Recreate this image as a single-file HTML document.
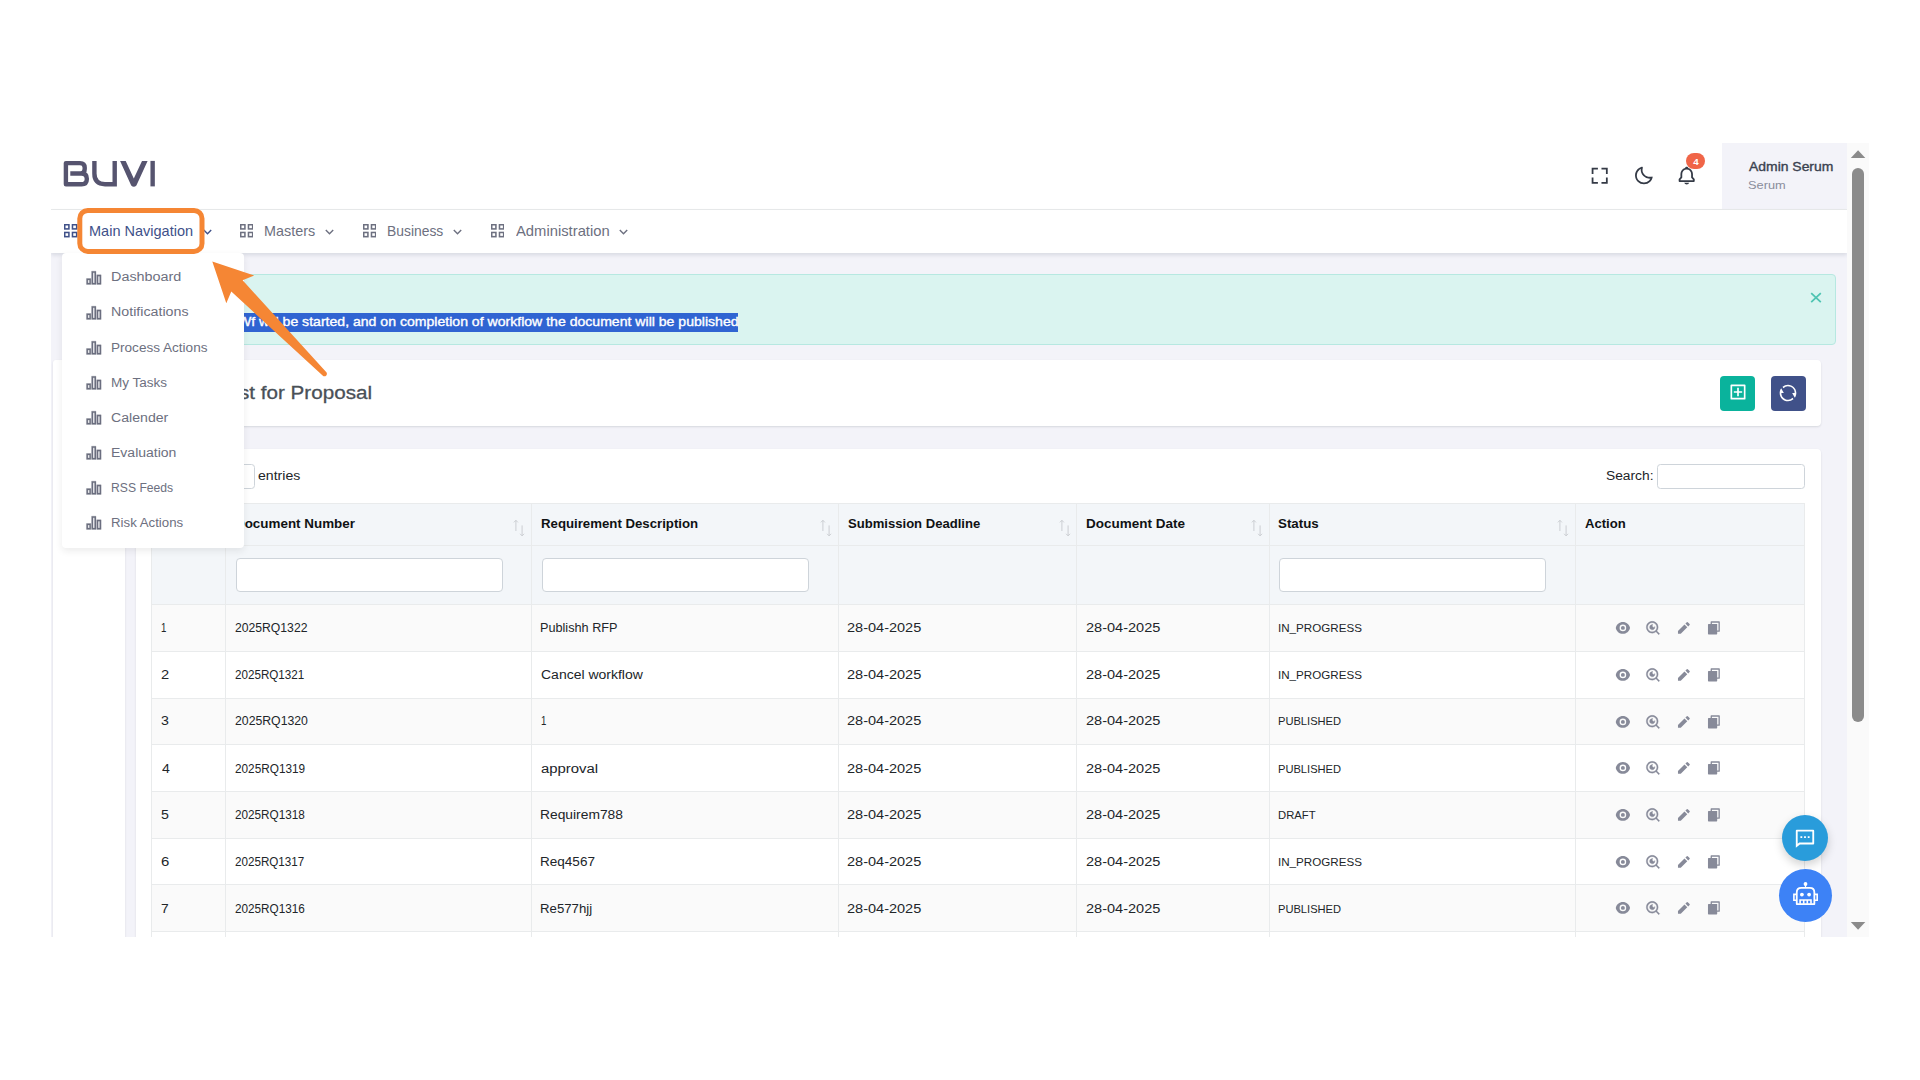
<!DOCTYPE html>
<html lang="en"><head><meta charset="utf-8"><title>Request for Proposal</title>
<style>
html,body{margin:0;padding:0;background:#fff}
body{width:1920px;height:1080px;overflow:hidden;position:relative;font-family:"Liberation Sans",sans-serif}
#clip{position:absolute;left:51px;top:143px;width:1817.7px;height:794px;overflow:hidden}
#in{position:absolute;left:-51px;top:-143px;width:1920px;height:1080px}
.b{position:absolute;display:block}
.tx{position:absolute;white-space:pre;line-height:1;transform-origin:0 50%;font-family:"Liberation Sans",sans-serif}
.med{-webkit-text-stroke:0.35px currentColor}
.ttl{-webkit-text-stroke:0.3px currentColor}
</style></head>
<body>
<div id="clip"><div id="in">
<div class="b" style="left:51px;top:143px;width:1796.1px;height:794px;background:#f3f3f9"></div>
<div class="b" style="left:51px;top:143px;width:1796.1px;height:66px;background:#ffffff"></div>
<div class="b" style="left:51px;top:209px;width:1796.1px;height:1px;background:#e9ebec"></div>
<div class="b" style="left:1722px;top:143px;width:125.1px;height:66.3px;background:#f3f3f9"></div>
<svg class="b" style="left:60px;top:156px" width="100" height="36" viewBox="60 156 100 36"><g fill="none" stroke="#56546f" stroke-width="4.4" stroke-linejoin="round"><path d="M70.3 173.5 H80.5 Q84.7 173.5 84.7 169 V167.6 Q84.7 163.1 80 163.1 H65.9 V184.2 H81.6 Q86.8 184.2 86.8 179.2 V178.6 Q86.8 173.5 81.4 173.5"/><path stroke-linejoin="miter" d="M94.4 160.9 V173.6 Q94.4 184.2 105 184.2 H114.7 V160.9"/><path d="M152.65 160.9 V186.4"/></g><path fill="#56546f" d="M120.1 160.9 H125.7 L133.8 178.6 L142 160.9 H147.6 L136.4 185.4 Q133.8 188 131.2 185.4 Z"/></svg>
<svg class="b" style="left:1589.33px;top:165.42px" width="21.4" height="21.4" viewBox="0 0 24 24"><path fill="#343a46" d="M5 5h5V3H3v7h2zm5 14H5v-5H3v7h7zm11-5h-2v5h-5v2h7zm-2-4h2V3h-7v2h5z"/></svg>
<svg class="b" style="left:1632.95px;top:165.22px" width="21.4" height="21.4" viewBox="0 0 24 24"><path fill="#343a46" d="M20.742 13.045a8.088 8.088 0 0 1-2.077.271c-2.135 0-4.14-.83-5.646-2.336a8.025 8.025 0 0 1-2.064-7.723A1 1 0 0 0 9.73 2.034a10.014 10.014 0 0 0-4.489 2.582c-3.898 3.898-3.898 10.243 0 14.143a9.937 9.937 0 0 0 7.072 2.93 9.93 9.93 0 0 0 7.07-2.929 10.007 10.007 0 0 0 2.583-4.491 1.001 1.001 0 0 0-1.224-1.224zm-2.772 4.301a7.947 7.947 0 0 1-5.656 2.343 7.953 7.953 0 0 1-5.658-2.344c-3.118-3.119-3.118-8.195 0-11.314a7.923 7.923 0 0 1 2.06-1.483 10.027 10.027 0 0 0 2.89 7.848 9.972 9.972 0 0 0 7.848 2.891 8.036 8.036 0 0 1-1.484 2.059z"/></svg>
<svg class="b" style="left:1676.33px;top:165.22px" width="21.4" height="21.4" viewBox="0 0 24 24"><path fill="#343a46" d="M19 13.586V10c0-3.217-2.185-5.927-5.145-6.742C13.562 2.52 12.846 2 12 2s-1.562.52-1.855 1.258C7.185 4.074 5 6.783 5 10v3.586l-1.707 1.707A.996.996 0 0 0 3 16v2a1 1 0 0 0 1 1h16a1 1 0 0 0 1-1v-2a.996.996 0 0 0-.293-.707L19 13.586zM19 17H5v-.586l1.707-1.707A.996.996 0 0 0 7 14v-4c0-2.757 2.243-5 5-5s5 2.243 5 5v4c0 .266.105.52.293.707L19 16.414V17zm-7 5a2.98 2.98 0 0 0 2.818-2H9.182A2.98 2.98 0 0 0 12 22z"/></svg>
<div class="b" style="left:1686.3px;top:152.5px;width:18.7px;height:16.2px;background:#f06548;border-radius:8.2px"></div>
<div class="b" style="left:66px;top:274.4px;width:1770px;height:70.6px;background:#daf4f0;border:1px solid #b6e8e1;border-radius:4px;box-sizing:border-box"></div>
<div class="b" style="left:200px;top:313.2px;width:538px;height:18.6px;background:#3064d2"></div>
<svg class="b" style="left:1810px;top:292px" width="12" height="12" viewBox="0 0 12 12"><path d="M1.2 1.2 L10.8 10.2 M10.8 1.2 L1.2 10.2" stroke="#4fc4b2" stroke-width="1.8" fill="none"/></svg>
<div class="b" style="left:53px;top:360.2px;width:72.2px;height:599.8px;background:#ffffff;border-radius:3px;box-shadow:0 1px 2px rgba(56,65,74,.15)"></div>
<div class="b" style="left:135.8px;top:360.2px;width:1685px;height:65.6px;background:#ffffff;border-radius:4px;box-shadow:0 1px 2px rgba(56,65,74,.15)"></div>
<div class="b" style="left:135.8px;top:448.5px;width:1685px;height:511.5px;background:#ffffff;border-radius:4px;box-shadow:0 1px 2px rgba(56,65,74,.15)"></div>
<div class="b" style="left:1719.5px;top:375.8px;width:35.8px;height:35px;background:#0ab39c;border-radius:4px"></div>
<div class="b" style="left:1770.5px;top:375.8px;width:35px;height:35px;background:#405189;border-radius:4px"></div>
<svg class="b" style="left:1727.8px;top:382.3px" width="20" height="20" viewBox="0 0 24 24"><path fill="#ffffff" d="M4 3h16a1 1 0 0 1 1 1v16a1 1 0 0 1-1 1H4a1 1 0 0 1-1-1V4a1 1 0 0 1 1-1zm1 2v14h14V5H5zm6 6V7h2v4h4v2h-4v4h-2v-4H7v-2h4z"/></svg>
<svg class="b" style="left:1778.4px;top:383px" width="20" height="20" viewBox="0 0 24 24"><path fill="#ffffff" d="M5.463 4.433A9.961 9.961 0 0 1 12 2c5.523 0 10 4.477 10 10 0 2.136-.67 4.116-1.81 5.74L17 12h3A8 8 0 0 0 6.46 6.228l-.997-1.795zm13.074 15.134A9.961 9.961 0 0 1 12 22C6.477 22 2 17.523 2 12c0-2.136.67-4.116 1.81-5.74L7 12H4a8 8 0 0 0 13.54 5.772l.997 1.795z"/></svg>
<div class="b" style="left:200px;top:464px;width:55px;height:24.5px;background:#ffffff;border:1px solid #ced4da;border-radius:3.5px;box-sizing:border-box"></div>
<div class="b" style="left:1657.2px;top:464.2px;width:148.3px;height:24.5px;background:#ffffff;border:1px solid #ced4da;border-radius:3.5px;box-sizing:border-box"></div>
<div class="b" style="left:151px;top:503px;width:1654.3px;height:101.4px;background:#f3f6f9"></div>
<div class="b" style="left:151px;top:604.5px;width:1654.3px;height:46.9px;background:#fafafa"></div>
<div class="b" style="left:151px;top:698.5px;width:1654.3px;height:46.2px;background:#fafafa"></div>
<div class="b" style="left:151px;top:791.8px;width:1654.3px;height:46.5px;background:#fafafa"></div>
<div class="b" style="left:151px;top:884.6px;width:1654.3px;height:47.1px;background:#fafafa"></div>
<div class="b" style="left:151px;top:502.5px;width:1654.3px;height:1px;background:#e9ebec"></div>
<div class="b" style="left:151px;top:544.9px;width:1654.3px;height:1px;background:#e9ebec"></div>
<div class="b" style="left:151px;top:604px;width:1654.3px;height:1px;background:#e9ebec"></div>
<div class="b" style="left:151px;top:650.9px;width:1654.3px;height:1px;background:#e9ebec"></div>
<div class="b" style="left:151px;top:698px;width:1654.3px;height:1px;background:#e9ebec"></div>
<div class="b" style="left:151px;top:744.2px;width:1654.3px;height:1px;background:#e9ebec"></div>
<div class="b" style="left:151px;top:791.3px;width:1654.3px;height:1px;background:#e9ebec"></div>
<div class="b" style="left:151px;top:837.8px;width:1654.3px;height:1px;background:#e9ebec"></div>
<div class="b" style="left:151px;top:884.1px;width:1654.3px;height:1px;background:#e9ebec"></div>
<div class="b" style="left:151px;top:931.2px;width:1654.3px;height:1px;background:#e9ebec"></div>
<div class="b" style="left:151px;top:503px;width:1px;height:457px;background:#e9ebec"></div>
<div class="b" style="left:224.7px;top:503px;width:1px;height:457px;background:#e9ebec"></div>
<div class="b" style="left:530.8px;top:503px;width:1px;height:457px;background:#e9ebec"></div>
<div class="b" style="left:837.6px;top:503px;width:1px;height:457px;background:#e9ebec"></div>
<div class="b" style="left:1076.2px;top:503px;width:1px;height:457px;background:#e9ebec"></div>
<div class="b" style="left:1268.8px;top:503px;width:1px;height:457px;background:#e9ebec"></div>
<div class="b" style="left:1574.5px;top:503px;width:1px;height:457px;background:#e9ebec"></div>
<div class="b" style="left:1804.3px;top:503px;width:1px;height:457px;background:#e9ebec"></div>
<div class="b" style="left:236px;top:557.6px;width:266.7px;height:34.6px;background:#ffffff;border:1px solid #ced4da;border-radius:4px;box-sizing:border-box"></div>
<div class="b" style="left:541.5px;top:557.6px;width:267.9px;height:34.6px;background:#ffffff;border:1px solid #ced4da;border-radius:4px;box-sizing:border-box"></div>
<div class="b" style="left:1278.7px;top:557.6px;width:267.1px;height:34.6px;background:#ffffff;border:1px solid #ced4da;border-radius:4px;box-sizing:border-box"></div>
<svg class="b" style="left:511.3px;top:518px" width="16" height="20" viewBox="0 0 16 20"><g stroke="#c9ccd1" stroke-width="0.95" fill="none"><path d="M4.9 2.3 V13 M2.9 4.4 L4.9 2.3 L6.9 4.4"/><path d="M11.1 7.4 V17.9 M9.1 15.8 L11.1 17.9 L13.1 15.8"/></g></svg>
<svg class="b" style="left:818.1px;top:518px" width="16" height="20" viewBox="0 0 16 20"><g stroke="#c9ccd1" stroke-width="0.95" fill="none"><path d="M4.9 2.3 V13 M2.9 4.4 L4.9 2.3 L6.9 4.4"/><path d="M11.1 7.4 V17.9 M9.1 15.8 L11.1 17.9 L13.1 15.8"/></g></svg>
<svg class="b" style="left:1056.7px;top:518px" width="16" height="20" viewBox="0 0 16 20"><g stroke="#c9ccd1" stroke-width="0.95" fill="none"><path d="M4.9 2.3 V13 M2.9 4.4 L4.9 2.3 L6.9 4.4"/><path d="M11.1 7.4 V17.9 M9.1 15.8 L11.1 17.9 L13.1 15.8"/></g></svg>
<svg class="b" style="left:1249.3px;top:518px" width="16" height="20" viewBox="0 0 16 20"><g stroke="#c9ccd1" stroke-width="0.95" fill="none"><path d="M4.9 2.3 V13 M2.9 4.4 L4.9 2.3 L6.9 4.4"/><path d="M11.1 7.4 V17.9 M9.1 15.8 L11.1 17.9 L13.1 15.8"/></g></svg>
<svg class="b" style="left:1555px;top:518px" width="16" height="20" viewBox="0 0 16 20"><g stroke="#c9ccd1" stroke-width="0.95" fill="none"><path d="M4.9 2.3 V13 M2.9 4.4 L4.9 2.3 L6.9 4.4"/><path d="M11.1 7.4 V17.9 M9.1 15.8 L11.1 17.9 L13.1 15.8"/></g></svg>
<svg class="b" style="left:1614.7px;top:619.8px" width="15.8" height="15.8" viewBox="0 0 24 24"><path fill="#878a99" d="M1.181 12C2.121 6.88 6.608 3 12 3c5.392 0 9.878 3.88 10.819 9-.94 5.12-5.427 9-10.819 9-5.392 0-9.878-3.88-10.819-9zM12 17a5 5 0 1 0 0-10 5 5 0 0 0 0 10zm0-2a3 3 0 1 1 0-6 3 3 0 0 1 0 6z"/></svg>
<svg class="b" style="left:1645.1px;top:619.8px" width="15.8" height="15.8" viewBox="0 0 24 24"><path fill="#878a99" stroke="#878a99" stroke-width="0.5" d="M18.031 16.617l4.283 4.282-1.415 1.415-4.282-4.283A8.96 8.96 0 0 1 11 20c-4.968 0-9-4.032-9-9s4.032-9 9-9 9 4.032 9 9a8.96 8.96 0 0 1-1.969 5.617zm-2.006-.742A6.977 6.977 0 0 0 18 11c0-3.868-3.133-7-7-7-3.868 0-7 3.132-7 7 0 3.867 3.132 7 7 7a6.977 6.977 0 0 0 4.875-1.975l.15-.15zm-3.847-8.699a2 2 0 1 0 2.646 2.646 4 4 0 1 1-2.646-2.646z"/></svg>
<svg class="b" style="left:1675.9px;top:619.8px" width="15.8" height="15.8" viewBox="0 0 24 24"><path fill="#878a99" d="M12.9 6.858l4.242 4.243L7.242 21H3v-4.243l9.9-9.9zm1.414-1.414l2.121-2.122a1 1 0 0 1 1.414 0l2.829 2.829a1 1 0 0 1 0 1.414l-2.122 2.121-4.242-4.242z"/></svg>
<svg class="b" style="left:1706.3px;top:619.8px" width="15.8" height="15.8" viewBox="0 0 24 24"><path fill="#878a99" d="M7 6V3a1 1 0 0 1 1-1h12a1 1 0 0 1 1 1v14a1 1 0 0 1-1 1h-3v3c0 .552-.45 1-1.007 1H4.007A1.001 1.001 0 0 1 3 21l.003-14c0-.552.45-1 1.007-1H7zm2 0h8v10h2V4H9v2z"/></svg>
<svg class="b" style="left:1614.7px;top:666.7px" width="15.8" height="15.8" viewBox="0 0 24 24"><path fill="#878a99" d="M1.181 12C2.121 6.88 6.608 3 12 3c5.392 0 9.878 3.88 10.819 9-.94 5.12-5.427 9-10.819 9-5.392 0-9.878-3.88-10.819-9zM12 17a5 5 0 1 0 0-10 5 5 0 0 0 0 10zm0-2a3 3 0 1 1 0-6 3 3 0 0 1 0 6z"/></svg>
<svg class="b" style="left:1645.1px;top:666.7px" width="15.8" height="15.8" viewBox="0 0 24 24"><path fill="#878a99" stroke="#878a99" stroke-width="0.5" d="M18.031 16.617l4.283 4.282-1.415 1.415-4.282-4.283A8.96 8.96 0 0 1 11 20c-4.968 0-9-4.032-9-9s4.032-9 9-9 9 4.032 9 9a8.96 8.96 0 0 1-1.969 5.617zm-2.006-.742A6.977 6.977 0 0 0 18 11c0-3.868-3.133-7-7-7-3.868 0-7 3.132-7 7 0 3.867 3.132 7 7 7a6.977 6.977 0 0 0 4.875-1.975l.15-.15zm-3.847-8.699a2 2 0 1 0 2.646 2.646 4 4 0 1 1-2.646-2.646z"/></svg>
<svg class="b" style="left:1675.9px;top:666.7px" width="15.8" height="15.8" viewBox="0 0 24 24"><path fill="#878a99" d="M12.9 6.858l4.242 4.243L7.242 21H3v-4.243l9.9-9.9zm1.414-1.414l2.121-2.122a1 1 0 0 1 1.414 0l2.829 2.829a1 1 0 0 1 0 1.414l-2.122 2.121-4.242-4.242z"/></svg>
<svg class="b" style="left:1706.3px;top:666.7px" width="15.8" height="15.8" viewBox="0 0 24 24"><path fill="#878a99" d="M7 6V3a1 1 0 0 1 1-1h12a1 1 0 0 1 1 1v14a1 1 0 0 1-1 1h-3v3c0 .552-.45 1-1.007 1H4.007A1.001 1.001 0 0 1 3 21l.003-14c0-.552.45-1 1.007-1H7zm2 0h8v10h2V4H9v2z"/></svg>
<svg class="b" style="left:1614.7px;top:713.8px" width="15.8" height="15.8" viewBox="0 0 24 24"><path fill="#878a99" d="M1.181 12C2.121 6.88 6.608 3 12 3c5.392 0 9.878 3.88 10.819 9-.94 5.12-5.427 9-10.819 9-5.392 0-9.878-3.88-10.819-9zM12 17a5 5 0 1 0 0-10 5 5 0 0 0 0 10zm0-2a3 3 0 1 1 0-6 3 3 0 0 1 0 6z"/></svg>
<svg class="b" style="left:1645.1px;top:713.8px" width="15.8" height="15.8" viewBox="0 0 24 24"><path fill="#878a99" stroke="#878a99" stroke-width="0.5" d="M18.031 16.617l4.283 4.282-1.415 1.415-4.282-4.283A8.96 8.96 0 0 1 11 20c-4.968 0-9-4.032-9-9s4.032-9 9-9 9 4.032 9 9a8.96 8.96 0 0 1-1.969 5.617zm-2.006-.742A6.977 6.977 0 0 0 18 11c0-3.868-3.133-7-7-7-3.868 0-7 3.132-7 7 0 3.867 3.132 7 7 7a6.977 6.977 0 0 0 4.875-1.975l.15-.15zm-3.847-8.699a2 2 0 1 0 2.646 2.646 4 4 0 1 1-2.646-2.646z"/></svg>
<svg class="b" style="left:1675.9px;top:713.8px" width="15.8" height="15.8" viewBox="0 0 24 24"><path fill="#878a99" d="M12.9 6.858l4.242 4.243L7.242 21H3v-4.243l9.9-9.9zm1.414-1.414l2.121-2.122a1 1 0 0 1 1.414 0l2.829 2.829a1 1 0 0 1 0 1.414l-2.122 2.121-4.242-4.242z"/></svg>
<svg class="b" style="left:1706.3px;top:713.8px" width="15.8" height="15.8" viewBox="0 0 24 24"><path fill="#878a99" d="M7 6V3a1 1 0 0 1 1-1h12a1 1 0 0 1 1 1v14a1 1 0 0 1-1 1h-3v3c0 .552-.45 1-1.007 1H4.007A1.001 1.001 0 0 1 3 21l.003-14c0-.552.45-1 1.007-1H7zm2 0h8v10h2V4H9v2z"/></svg>
<svg class="b" style="left:1614.7px;top:760px" width="15.8" height="15.8" viewBox="0 0 24 24"><path fill="#878a99" d="M1.181 12C2.121 6.88 6.608 3 12 3c5.392 0 9.878 3.88 10.819 9-.94 5.12-5.427 9-10.819 9-5.392 0-9.878-3.88-10.819-9zM12 17a5 5 0 1 0 0-10 5 5 0 0 0 0 10zm0-2a3 3 0 1 1 0-6 3 3 0 0 1 0 6z"/></svg>
<svg class="b" style="left:1645.1px;top:760px" width="15.8" height="15.8" viewBox="0 0 24 24"><path fill="#878a99" stroke="#878a99" stroke-width="0.5" d="M18.031 16.617l4.283 4.282-1.415 1.415-4.282-4.283A8.96 8.96 0 0 1 11 20c-4.968 0-9-4.032-9-9s4.032-9 9-9 9 4.032 9 9a8.96 8.96 0 0 1-1.969 5.617zm-2.006-.742A6.977 6.977 0 0 0 18 11c0-3.868-3.133-7-7-7-3.868 0-7 3.132-7 7 0 3.867 3.132 7 7 7a6.977 6.977 0 0 0 4.875-1.975l.15-.15zm-3.847-8.699a2 2 0 1 0 2.646 2.646 4 4 0 1 1-2.646-2.646z"/></svg>
<svg class="b" style="left:1675.9px;top:760px" width="15.8" height="15.8" viewBox="0 0 24 24"><path fill="#878a99" d="M12.9 6.858l4.242 4.243L7.242 21H3v-4.243l9.9-9.9zm1.414-1.414l2.121-2.122a1 1 0 0 1 1.414 0l2.829 2.829a1 1 0 0 1 0 1.414l-2.122 2.121-4.242-4.242z"/></svg>
<svg class="b" style="left:1706.3px;top:760px" width="15.8" height="15.8" viewBox="0 0 24 24"><path fill="#878a99" d="M7 6V3a1 1 0 0 1 1-1h12a1 1 0 0 1 1 1v14a1 1 0 0 1-1 1h-3v3c0 .552-.45 1-1.007 1H4.007A1.001 1.001 0 0 1 3 21l.003-14c0-.552.45-1 1.007-1H7zm2 0h8v10h2V4H9v2z"/></svg>
<svg class="b" style="left:1614.7px;top:807.1px" width="15.8" height="15.8" viewBox="0 0 24 24"><path fill="#878a99" d="M1.181 12C2.121 6.88 6.608 3 12 3c5.392 0 9.878 3.88 10.819 9-.94 5.12-5.427 9-10.819 9-5.392 0-9.878-3.88-10.819-9zM12 17a5 5 0 1 0 0-10 5 5 0 0 0 0 10zm0-2a3 3 0 1 1 0-6 3 3 0 0 1 0 6z"/></svg>
<svg class="b" style="left:1645.1px;top:807.1px" width="15.8" height="15.8" viewBox="0 0 24 24"><path fill="#878a99" stroke="#878a99" stroke-width="0.5" d="M18.031 16.617l4.283 4.282-1.415 1.415-4.282-4.283A8.96 8.96 0 0 1 11 20c-4.968 0-9-4.032-9-9s4.032-9 9-9 9 4.032 9 9a8.96 8.96 0 0 1-1.969 5.617zm-2.006-.742A6.977 6.977 0 0 0 18 11c0-3.868-3.133-7-7-7-3.868 0-7 3.132-7 7 0 3.867 3.132 7 7 7a6.977 6.977 0 0 0 4.875-1.975l.15-.15zm-3.847-8.699a2 2 0 1 0 2.646 2.646 4 4 0 1 1-2.646-2.646z"/></svg>
<svg class="b" style="left:1675.9px;top:807.1px" width="15.8" height="15.8" viewBox="0 0 24 24"><path fill="#878a99" d="M12.9 6.858l4.242 4.243L7.242 21H3v-4.243l9.9-9.9zm1.414-1.414l2.121-2.122a1 1 0 0 1 1.414 0l2.829 2.829a1 1 0 0 1 0 1.414l-2.122 2.121-4.242-4.242z"/></svg>
<svg class="b" style="left:1706.3px;top:807.1px" width="15.8" height="15.8" viewBox="0 0 24 24"><path fill="#878a99" d="M7 6V3a1 1 0 0 1 1-1h12a1 1 0 0 1 1 1v14a1 1 0 0 1-1 1h-3v3c0 .552-.45 1-1.007 1H4.007A1.001 1.001 0 0 1 3 21l.003-14c0-.552.45-1 1.007-1H7zm2 0h8v10h2V4H9v2z"/></svg>
<svg class="b" style="left:1614.7px;top:853.6px" width="15.8" height="15.8" viewBox="0 0 24 24"><path fill="#878a99" d="M1.181 12C2.121 6.88 6.608 3 12 3c5.392 0 9.878 3.88 10.819 9-.94 5.12-5.427 9-10.819 9-5.392 0-9.878-3.88-10.819-9zM12 17a5 5 0 1 0 0-10 5 5 0 0 0 0 10zm0-2a3 3 0 1 1 0-6 3 3 0 0 1 0 6z"/></svg>
<svg class="b" style="left:1645.1px;top:853.6px" width="15.8" height="15.8" viewBox="0 0 24 24"><path fill="#878a99" stroke="#878a99" stroke-width="0.5" d="M18.031 16.617l4.283 4.282-1.415 1.415-4.282-4.283A8.96 8.96 0 0 1 11 20c-4.968 0-9-4.032-9-9s4.032-9 9-9 9 4.032 9 9a8.96 8.96 0 0 1-1.969 5.617zm-2.006-.742A6.977 6.977 0 0 0 18 11c0-3.868-3.133-7-7-7-3.868 0-7 3.132-7 7 0 3.867 3.132 7 7 7a6.977 6.977 0 0 0 4.875-1.975l.15-.15zm-3.847-8.699a2 2 0 1 0 2.646 2.646 4 4 0 1 1-2.646-2.646z"/></svg>
<svg class="b" style="left:1675.9px;top:853.6px" width="15.8" height="15.8" viewBox="0 0 24 24"><path fill="#878a99" d="M12.9 6.858l4.242 4.243L7.242 21H3v-4.243l9.9-9.9zm1.414-1.414l2.121-2.122a1 1 0 0 1 1.414 0l2.829 2.829a1 1 0 0 1 0 1.414l-2.122 2.121-4.242-4.242z"/></svg>
<svg class="b" style="left:1706.3px;top:853.6px" width="15.8" height="15.8" viewBox="0 0 24 24"><path fill="#878a99" d="M7 6V3a1 1 0 0 1 1-1h12a1 1 0 0 1 1 1v14a1 1 0 0 1-1 1h-3v3c0 .552-.45 1-1.007 1H4.007A1.001 1.001 0 0 1 3 21l.003-14c0-.552.45-1 1.007-1H7zm2 0h8v10h2V4H9v2z"/></svg>
<svg class="b" style="left:1614.7px;top:899.9px" width="15.8" height="15.8" viewBox="0 0 24 24"><path fill="#878a99" d="M1.181 12C2.121 6.88 6.608 3 12 3c5.392 0 9.878 3.88 10.819 9-.94 5.12-5.427 9-10.819 9-5.392 0-9.878-3.88-10.819-9zM12 17a5 5 0 1 0 0-10 5 5 0 0 0 0 10zm0-2a3 3 0 1 1 0-6 3 3 0 0 1 0 6z"/></svg>
<svg class="b" style="left:1645.1px;top:899.9px" width="15.8" height="15.8" viewBox="0 0 24 24"><path fill="#878a99" stroke="#878a99" stroke-width="0.5" d="M18.031 16.617l4.283 4.282-1.415 1.415-4.282-4.283A8.96 8.96 0 0 1 11 20c-4.968 0-9-4.032-9-9s4.032-9 9-9 9 4.032 9 9a8.96 8.96 0 0 1-1.969 5.617zm-2.006-.742A6.977 6.977 0 0 0 18 11c0-3.868-3.133-7-7-7-3.868 0-7 3.132-7 7 0 3.867 3.132 7 7 7a6.977 6.977 0 0 0 4.875-1.975l.15-.15zm-3.847-8.699a2 2 0 1 0 2.646 2.646 4 4 0 1 1-2.646-2.646z"/></svg>
<svg class="b" style="left:1675.9px;top:899.9px" width="15.8" height="15.8" viewBox="0 0 24 24"><path fill="#878a99" d="M12.9 6.858l4.242 4.243L7.242 21H3v-4.243l9.9-9.9zm1.414-1.414l2.121-2.122a1 1 0 0 1 1.414 0l2.829 2.829a1 1 0 0 1 0 1.414l-2.122 2.121-4.242-4.242z"/></svg>
<svg class="b" style="left:1706.3px;top:899.9px" width="15.8" height="15.8" viewBox="0 0 24 24"><path fill="#878a99" d="M7 6V3a1 1 0 0 1 1-1h12a1 1 0 0 1 1 1v14a1 1 0 0 1-1 1h-3v3c0 .552-.45 1-1.007 1H4.007A1.001 1.001 0 0 1 3 21l.003-14c0-.552.45-1 1.007-1H7zm2 0h8v10h2V4H9v2z"/></svg>
<span class="tx med" style="left:1748.5px;top:161px;font-size:12.6px;color:#3a4250;transform:scaleX(1.1057)">Admin Serum</span>
<span class="tx" style="left:1747.96px;top:180px;font-size:11.8px;color:#8a8d9c;transform:scaleX(1.0840)">Serum</span>
<span class="tx med" style="left:238px;top:316px;font-size:12.6px;color:#ffffff;transform:scaleX(1.1174)">Wf will be started, and on completion of workflow the document will be published</span>
<span class="tx ttl" style="left:239.18px;top:384px;font-size:18.8px;color:#495057;transform:scaleX(1.0988)">st for Proposal</span>
<span class="tx" style="left:257.93px;top:470px;font-size:12.3px;color:#212529;transform:scaleX(1.1467)">entries</span>
<span class="tx" style="left:1605.74px;top:470px;font-size:12.3px;color:#212529;transform:scaleX(1.1205)">Search:</span>
<span class="tx" style="left:234.91px;top:518px;font-size:12.3px;color:#101214;transform:scaleX(1.0903);font-weight:700">Document Number</span>
<span class="tx" style="left:540.63px;top:518px;font-size:12.3px;color:#101214;transform:scaleX(1.0748);font-weight:700">Requirement Description</span>
<span class="tx" style="left:847.67px;top:518px;font-size:12.3px;color:#101214;transform:scaleX(1.0633);font-weight:700">Submission Deadline</span>
<span class="tx" style="left:1086.01px;top:518px;font-size:12.3px;color:#101214;transform:scaleX(1.0967);font-weight:700">Document Date</span>
<span class="tx" style="left:1278.36px;top:518px;font-size:12.3px;color:#101214;transform:scaleX(1.0839);font-weight:700">Status</span>
<span class="tx" style="left:1584.73px;top:518px;font-size:12.3px;color:#101214;transform:scaleX(1.0658);font-weight:700">Action</span>
<span class="tx" style="left:161.1px;top:622px;font-size:12px;color:#212529;transform:scaleX(0.8000)">1</span>
<span class="tx" style="left:235.23px;top:622px;font-size:12px;color:#212529;transform:scaleX(1.0145)">2025RQ1322</span>
<span class="tx" style="left:540.47px;top:622px;font-size:12.3px;color:#212529;transform:scaleX(1.0305)">Publishh RFP</span>
<span class="tx" style="left:847.32px;top:622px;font-size:12px;color:#212529;transform:scaleX(1.2099)">28-04-2025</span>
<span class="tx" style="left:1086.22px;top:622px;font-size:12px;color:#212529;transform:scaleX(1.2116)">28-04-2025</span>
<span class="tx" style="left:1277.65px;top:623px;font-size:11.8px;color:#212529;transform:scaleX(0.9846)">IN_PROGRESS</span>
<span class="tx" style="left:161.11px;top:669px;font-size:12px;color:#212529;transform:scaleX(1.2225)">2</span>
<span class="tx" style="left:235.25px;top:669px;font-size:12px;color:#212529;transform:scaleX(0.9704)">2025RQ1321</span>
<span class="tx" style="left:540.79px;top:669px;font-size:12.3px;color:#212529;transform:scaleX(1.1374)">Cancel workflow</span>
<span class="tx" style="left:847.32px;top:669px;font-size:12px;color:#212529;transform:scaleX(1.2099)">28-04-2025</span>
<span class="tx" style="left:1086.22px;top:669px;font-size:12px;color:#212529;transform:scaleX(1.2116)">28-04-2025</span>
<span class="tx" style="left:1277.65px;top:670px;font-size:11.8px;color:#212529;transform:scaleX(0.9846)">IN_PROGRESS</span>
<span class="tx" style="left:161.28px;top:715px;font-size:12px;color:#212529;transform:scaleX(1.1826)">3</span>
<span class="tx" style="left:235.23px;top:715px;font-size:12px;color:#212529;transform:scaleX(1.0212)">2025RQ1320</span>
<span class="tx" style="left:540.8px;top:715px;font-size:12px;color:#212529;transform:scaleX(0.8000)">1</span>
<span class="tx" style="left:847.32px;top:715px;font-size:12px;color:#212529;transform:scaleX(1.2099)">28-04-2025</span>
<span class="tx" style="left:1086.22px;top:715px;font-size:12px;color:#212529;transform:scaleX(1.2116)">28-04-2025</span>
<span class="tx" style="left:1277.82px;top:716px;font-size:11.8px;color:#212529;transform:scaleX(0.9430)">PUBLISHED</span>
<span class="tx" style="left:161.51px;top:763px;font-size:12px;color:#212529;transform:scaleX(1.1755)">4</span>
<span class="tx" style="left:235.25px;top:763px;font-size:12px;color:#212529;transform:scaleX(0.9818)">2025RQ1319</span>
<span class="tx" style="left:540.89px;top:763px;font-size:12.3px;color:#212529;transform:scaleX(1.2117)">approval</span>
<span class="tx" style="left:847.32px;top:763px;font-size:12px;color:#212529;transform:scaleX(1.2099)">28-04-2025</span>
<span class="tx" style="left:1086.22px;top:763px;font-size:12px;color:#212529;transform:scaleX(1.2116)">28-04-2025</span>
<span class="tx" style="left:1277.82px;top:764px;font-size:11.8px;color:#212529;transform:scaleX(0.9430)">PUBLISHED</span>
<span class="tx" style="left:161.28px;top:809px;font-size:12px;color:#212529;transform:scaleX(1.1826)">5</span>
<span class="tx" style="left:235.25px;top:809px;font-size:12px;color:#212529;transform:scaleX(0.9781)">2025RQ1318</span>
<span class="tx" style="left:540.38px;top:809px;font-size:12.3px;color:#212529;transform:scaleX(1.1243)">Requirem788</span>
<span class="tx" style="left:847.32px;top:809px;font-size:12px;color:#212529;transform:scaleX(1.2099)">28-04-2025</span>
<span class="tx" style="left:1086.22px;top:809px;font-size:12px;color:#212529;transform:scaleX(1.2116)">28-04-2025</span>
<span class="tx" style="left:1277.8px;top:810px;font-size:11.8px;color:#212529;transform:scaleX(0.9549)">DRAFT</span>
<span class="tx" style="left:161.1px;top:856px;font-size:12px;color:#212529;transform:scaleX(1.2444)">6</span>
<span class="tx" style="left:235.25px;top:856px;font-size:12px;color:#212529;transform:scaleX(0.9704)">2025RQ1317</span>
<span class="tx" style="left:540.4px;top:856px;font-size:12.3px;color:#212529;transform:scaleX(1.1006)">Req4567</span>
<span class="tx" style="left:847.32px;top:856px;font-size:12px;color:#212529;transform:scaleX(1.2099)">28-04-2025</span>
<span class="tx" style="left:1086.22px;top:856px;font-size:12px;color:#212529;transform:scaleX(1.2116)">28-04-2025</span>
<span class="tx" style="left:1277.65px;top:857px;font-size:11.8px;color:#212529;transform:scaleX(0.9846)">IN_PROGRESS</span>
<span class="tx" style="left:161.15px;top:903px;font-size:12px;color:#212529;transform:scaleX(1.1506)">7</span>
<span class="tx" style="left:235.25px;top:903px;font-size:12px;color:#212529;transform:scaleX(0.9781)">2025RQ1316</span>
<span class="tx" style="left:540.43px;top:903px;font-size:12.3px;color:#212529;transform:scaleX(1.0737)">Re577hjj</span>
<span class="tx" style="left:847.32px;top:903px;font-size:12px;color:#212529;transform:scaleX(1.2099)">28-04-2025</span>
<span class="tx" style="left:1086.22px;top:903px;font-size:12px;color:#212529;transform:scaleX(1.2116)">28-04-2025</span>
<span class="tx" style="left:1277.82px;top:904px;font-size:11.8px;color:#212529;transform:scaleX(0.9430)">PUBLISHED</span>
<span class="tx" style="left:1693.3px;top:157px;font-size:9.8px;font-weight:700;color:#fff">4</span>
<div class="b" style="left:51px;top:210px;width:1796.1px;height:43.3px;background:#ffffff;box-shadow:0 2px 4px rgba(15,34,58,.12)"></div>
<svg class="b" style="left:64.2px;top:224.2px" width="13.4" height="13.4" viewBox="0 0 13.4 13.4"><g fill="none" stroke="#405189" stroke-width="1.55"><rect x="0.72" y="0.72" width="4.2" height="4.2"/><rect x="8.48" y="0.72" width="4.2" height="4.2"/><rect x="0.72" y="8.48" width="4.2" height="4.2"/><rect x="8.48" y="8.48" width="4.2" height="4.2"/></g></svg>
<svg class="b" style="left:239.6px;top:224.2px" width="13.4" height="13.4" viewBox="0 0 13.4 13.4"><g fill="none" stroke="#6d7080" stroke-width="1.55"><rect x="0.72" y="0.72" width="4.2" height="4.2"/><rect x="8.48" y="0.72" width="4.2" height="4.2"/><rect x="0.72" y="8.48" width="4.2" height="4.2"/><rect x="8.48" y="8.48" width="4.2" height="4.2"/></g></svg>
<svg class="b" style="left:362.6px;top:224.2px" width="13.4" height="13.4" viewBox="0 0 13.4 13.4"><g fill="none" stroke="#6d7080" stroke-width="1.55"><rect x="0.72" y="0.72" width="4.2" height="4.2"/><rect x="8.48" y="0.72" width="4.2" height="4.2"/><rect x="0.72" y="8.48" width="4.2" height="4.2"/><rect x="8.48" y="8.48" width="4.2" height="4.2"/></g></svg>
<svg class="b" style="left:490.5px;top:224.2px" width="13.4" height="13.4" viewBox="0 0 13.4 13.4"><g fill="none" stroke="#6d7080" stroke-width="1.55"><rect x="0.72" y="0.72" width="4.2" height="4.2"/><rect x="8.48" y="0.72" width="4.2" height="4.2"/><rect x="0.72" y="8.48" width="4.2" height="4.2"/><rect x="8.48" y="8.48" width="4.2" height="4.2"/></g></svg>
<svg class="b" style="left:203px;top:228.6px" width="9" height="6" viewBox="0 0 9 6"><path d="M0.8 0.9 L4.5 4.7 L8.2 0.9" fill="none" stroke="#405189" stroke-width="1.4"/></svg>
<svg class="b" style="left:325.2px;top:228.6px" width="9" height="6" viewBox="0 0 9 6"><path d="M0.8 0.9 L4.5 4.7 L8.2 0.9" fill="none" stroke="#6d7080" stroke-width="1.4"/></svg>
<svg class="b" style="left:453.1px;top:228.6px" width="9" height="6" viewBox="0 0 9 6"><path d="M0.8 0.9 L4.5 4.7 L8.2 0.9" fill="none" stroke="#6d7080" stroke-width="1.4"/></svg>
<svg class="b" style="left:619.1px;top:228.6px" width="9" height="6" viewBox="0 0 9 6"><path d="M0.8 0.9 L4.5 4.7 L8.2 0.9" fill="none" stroke="#6d7080" stroke-width="1.4"/></svg>
<span class="tx" style="left:88.82px;top:224px;font-size:14.6px;color:#405189;transform:scaleX(0.9945)">Main Navigation</span>
<span class="tx" style="left:263.93px;top:224px;font-size:14.6px;color:#6d7080;transform:scaleX(0.9852)">Masters</span>
<span class="tx" style="left:386.87px;top:224px;font-size:14.6px;color:#6d7080;transform:scaleX(0.9502)">Business</span>
<span class="tx" style="left:515.6px;top:224px;font-size:14.6px;color:#6d7080;transform:scaleX(1.0134)">Administration</span>
<div class="b" style="left:62.3px;top:253px;width:181.7px;height:295px;background:#ffffff;border-radius:4px;box-shadow:0 3px 7px rgba(30,32,37,.085)"></div>
<svg class="b" style="left:84.8px;top:268.55px" width="17.6" height="17.6" viewBox="0 0 24 24"><path fill="#6d7080" stroke="#6d7080" stroke-width="0.35" d="M2 13h6v8H2v-8zm14-5h6v13h-6V8zM9 3h6v18H9V3zM4 15v4h2v-4H4zm7-10v14h2V5h-2zm7 5v9h2v-9h-2z"/></svg>
<svg class="b" style="left:84.8px;top:303.58px" width="17.6" height="17.6" viewBox="0 0 24 24"><path fill="#6d7080" stroke="#6d7080" stroke-width="0.35" d="M2 13h6v8H2v-8zm14-5h6v13h-6V8zM9 3h6v18H9V3zM4 15v4h2v-4H4zm7-10v14h2V5h-2zm7 5v9h2v-9h-2z"/></svg>
<svg class="b" style="left:84.8px;top:338.61px" width="17.6" height="17.6" viewBox="0 0 24 24"><path fill="#6d7080" stroke="#6d7080" stroke-width="0.35" d="M2 13h6v8H2v-8zm14-5h6v13h-6V8zM9 3h6v18H9V3zM4 15v4h2v-4H4zm7-10v14h2V5h-2zm7 5v9h2v-9h-2z"/></svg>
<svg class="b" style="left:84.8px;top:373.64px" width="17.6" height="17.6" viewBox="0 0 24 24"><path fill="#6d7080" stroke="#6d7080" stroke-width="0.35" d="M2 13h6v8H2v-8zm14-5h6v13h-6V8zM9 3h6v18H9V3zM4 15v4h2v-4H4zm7-10v14h2V5h-2zm7 5v9h2v-9h-2z"/></svg>
<svg class="b" style="left:84.8px;top:408.67px" width="17.6" height="17.6" viewBox="0 0 24 24"><path fill="#6d7080" stroke="#6d7080" stroke-width="0.35" d="M2 13h6v8H2v-8zm14-5h6v13h-6V8zM9 3h6v18H9V3zM4 15v4h2v-4H4zm7-10v14h2V5h-2zm7 5v9h2v-9h-2z"/></svg>
<svg class="b" style="left:84.8px;top:443.7px" width="17.6" height="17.6" viewBox="0 0 24 24"><path fill="#6d7080" stroke="#6d7080" stroke-width="0.35" d="M2 13h6v8H2v-8zm14-5h6v13h-6V8zM9 3h6v18H9V3zM4 15v4h2v-4H4zm7-10v14h2V5h-2zm7 5v9h2v-9h-2z"/></svg>
<svg class="b" style="left:84.8px;top:478.73px" width="17.6" height="17.6" viewBox="0 0 24 24"><path fill="#6d7080" stroke="#6d7080" stroke-width="0.35" d="M2 13h6v8H2v-8zm14-5h6v13h-6V8zM9 3h6v18H9V3zM4 15v4h2v-4H4zm7-10v14h2V5h-2zm7 5v9h2v-9h-2z"/></svg>
<svg class="b" style="left:84.8px;top:513.76px" width="17.6" height="17.6" viewBox="0 0 24 24"><path fill="#6d7080" stroke="#6d7080" stroke-width="0.35" d="M2 13h6v8H2v-8zm14-5h6v13h-6V8zM9 3h6v18H9V3zM4 15v4h2v-4H4zm7-10v14h2V5h-2zm7 5v9h2v-9h-2z"/></svg>
<span class="tx" style="left:110.73px;top:271px;font-size:12.3px;color:#6d7080;transform:scaleX(1.1696)">Dashboard</span>
<span class="tx" style="left:110.74px;top:306px;font-size:12.3px;color:#6d7080;transform:scaleX(1.1571)">Notifications</span>
<span class="tx" style="left:110.8px;top:342px;font-size:12.3px;color:#6d7080;transform:scaleX(1.1028)">Process Actions</span>
<span class="tx" style="left:110.8px;top:377px;font-size:12.3px;color:#6d7080;transform:scaleX(1.0992)">My Tasks</span>
<span class="tx" style="left:111.18px;top:412px;font-size:12.3px;color:#6d7080;transform:scaleX(1.1480)">Calender</span>
<span class="tx" style="left:110.76px;top:447px;font-size:12.3px;color:#6d7080;transform:scaleX(1.1390)">Evaluation</span>
<span class="tx" style="left:110.91px;top:482px;font-size:12.3px;color:#6d7080;transform:scaleX(0.9887)">RSS Feeds</span>
<span class="tx" style="left:110.82px;top:517px;font-size:12.3px;color:#6d7080;transform:scaleX(1.0775)">Risk Actions</span>
<div class="b" style="left:1782px;top:815px;width:46.4px;height:46.4px;background:#299cdb;border-radius:50%;box-shadow:0 4px 10px rgba(0,0,0,.18)"></div>
<div class="b" style="left:1779px;top:868.9px;width:53.2px;height:53px;background:#3d82f6;border-radius:50%"></div>
<svg class="b" style="left:1794px;top:827px" width="22" height="22" viewBox="0 0 24 24"><path fill="#ffffff" d="M6.455 19L2 22.5V4a1 1 0 0 1 1-1h18a1 1 0 0 1 1 1v14a1 1 0 0 1-1 1H6.455zm-.692-2H20V5H4v13.385L5.763 17zM11 10h2v2h-2v-2zm-4 0h2v2H7v-2zm8 0h2v2h-2v-2z"/></svg>
<svg class="b" style="left:1792px;top:880px" width="28" height="27" viewBox="0 0 28 27"><g fill="none" stroke="#fff" stroke-width="1.8"><path d="M4.75 24.05 V12.4 Q4.75 7.85 9.3 7.85 H17.8 Q22.35 7.85 22.35 12.4 V24.05 Z" stroke-linejoin="round"/><path d="M13.5 7.6 V4.2" stroke-width="1.2"/><path d="M4.6 14.4 H1.9 V20.3 H4.6 M22.5 14.4 H25.2 V20.3 H22.5" stroke-width="1.6"/><path d="M8.1 23.8 V20 H19 V23.8 M11.7 20 V23.8 M15.3 20 V23.8" stroke-width="1.6"/></g><circle cx="13.5" cy="4" r="1.9" fill="#fff"/><circle cx="9.9" cy="14.6" r="1.9" fill="#fff"/><circle cx="17.1" cy="14.6" r="1.9" fill="#fff"/></svg>
<div class="b" style="left:1847.1px;top:143px;width:21.6px;height:794px;background:#fafafa"></div>
<div class="b" style="left:1852.1px;top:167.9px;width:11.9px;height:553.9px;background:#8b8b8b;border-radius:6px"></div>
<svg class="b" style="left:1850px;top:149px" width="16" height="10" viewBox="1850 149 16 10"><path d="M1850.8 157.9 L1858.05 150.2 L1865.3 157.9 Z" fill="#8b8b8b"/></svg>
<svg class="b" style="left:1850px;top:921px" width="16" height="10" viewBox="1850 921 16 10"><path d="M1850.8 922 L1858.05 929.7 L1865.3 922 Z" fill="#8b8b8b"/></svg>
</div></div>
<svg class="b" style="left:60px;top:200px" width="300" height="190" viewBox="60 200 300 190"><rect x="79.8" y="210.4" width="122.2" height="41" rx="8" ry="8" fill="none" stroke="#f58634" stroke-width="5"/><path d="M212.3 261.5 L254.2 275.6 L242.6 280.2 L326.6 372.6 Q327.6 375.2 325.4 376.2 Q323.6 376.6 322.6 375.4 L231.3 291.6 L226.3 303.2 Z" fill="#f58634"/></svg>
</body></html>
